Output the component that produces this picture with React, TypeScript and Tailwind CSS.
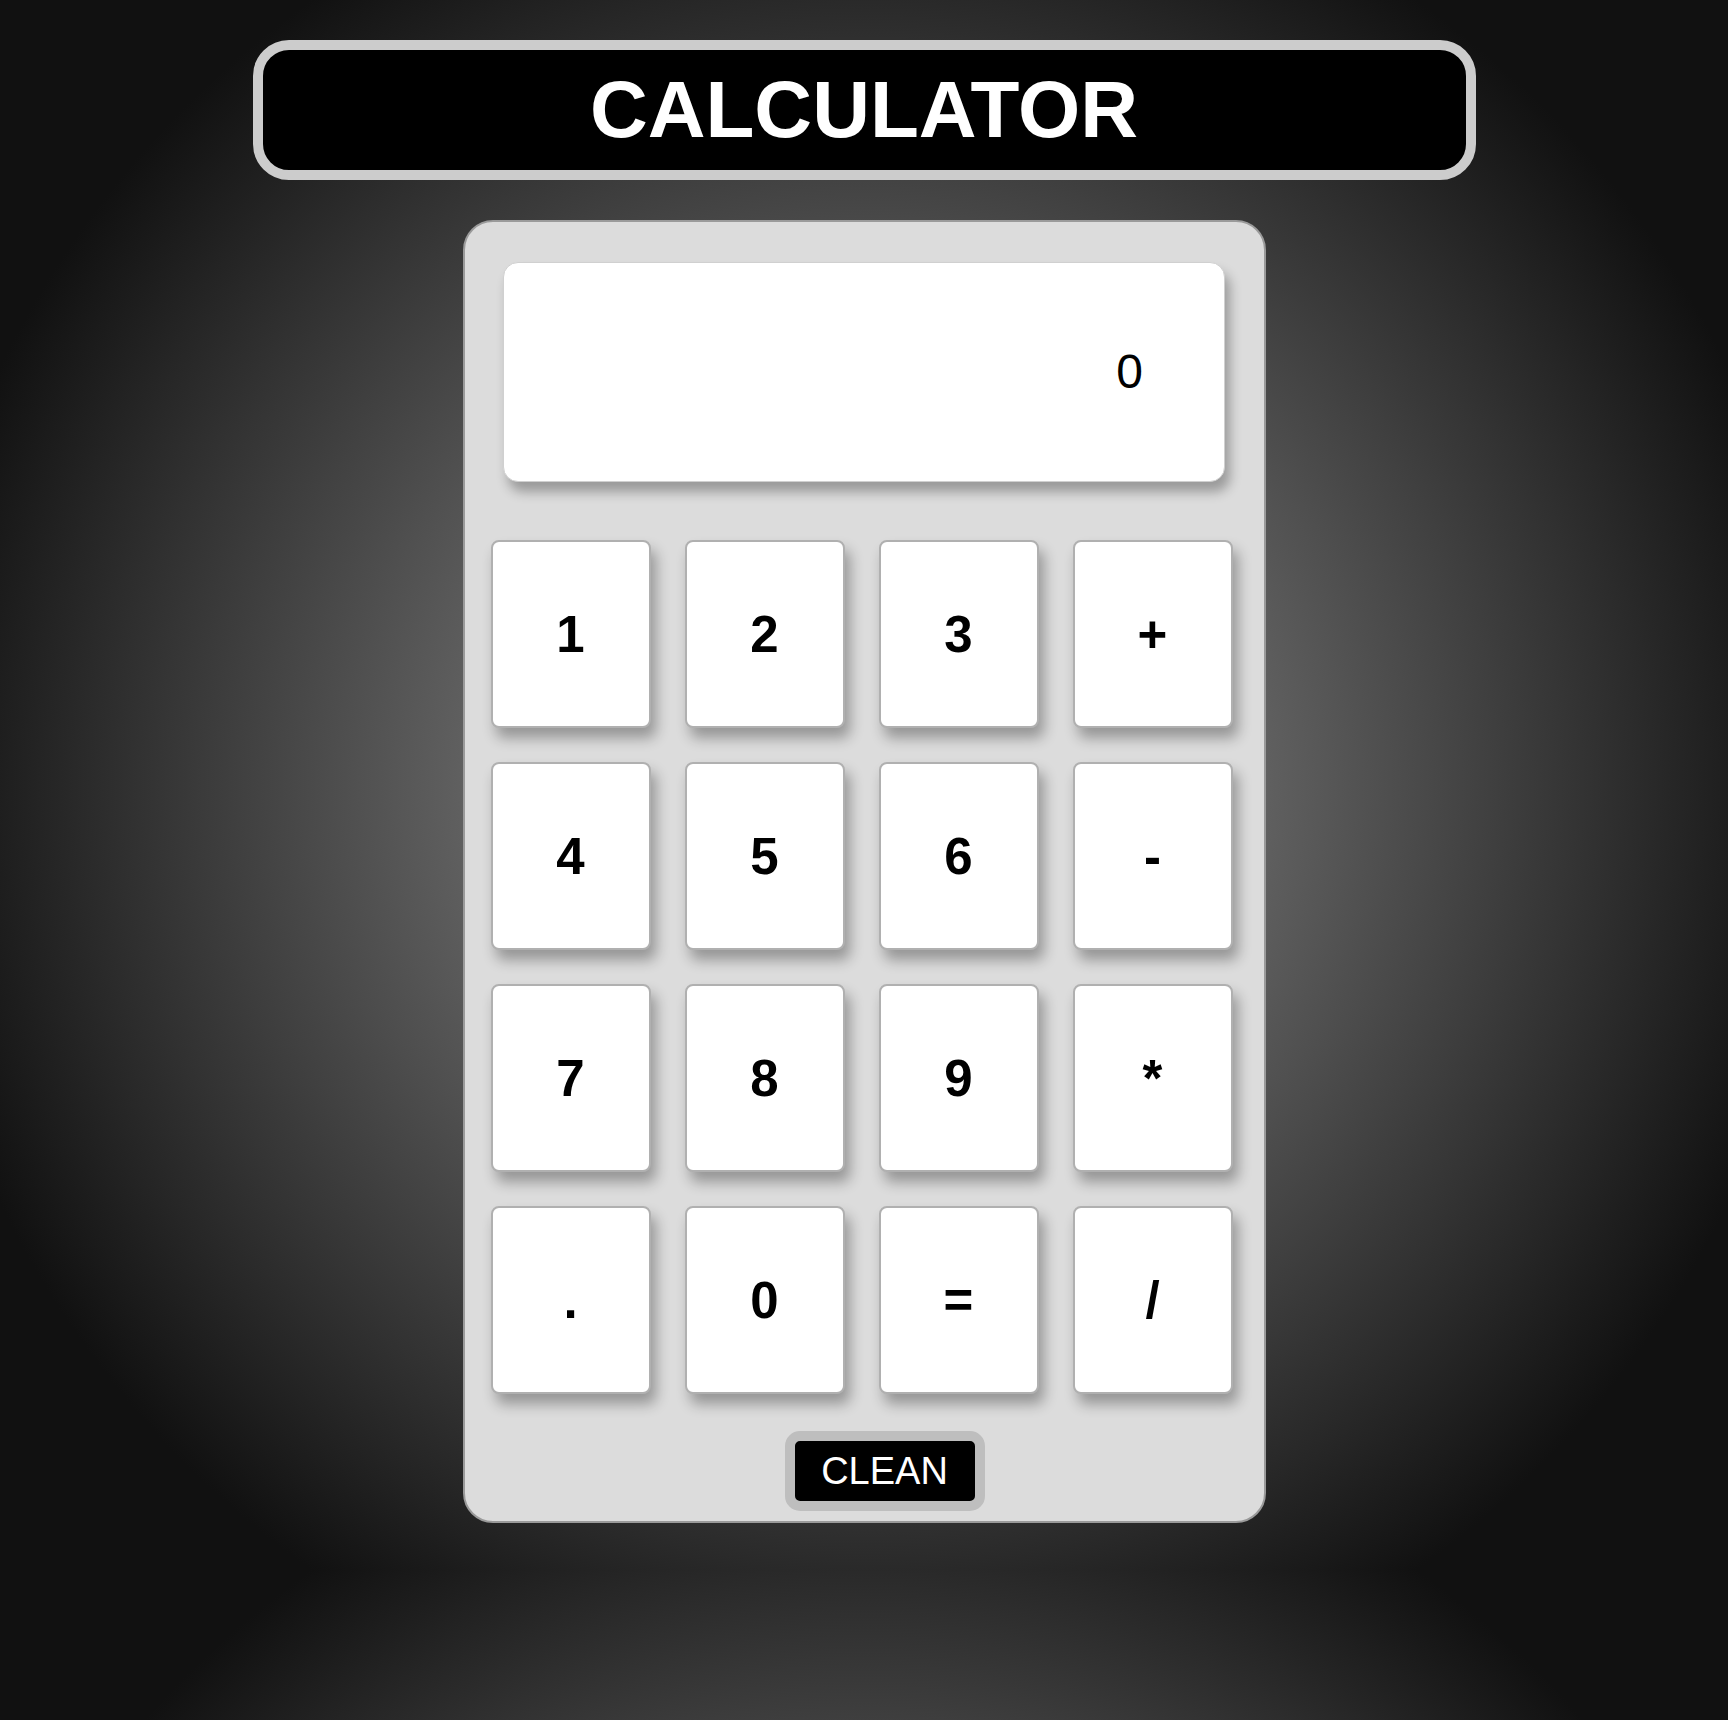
const keys = ["1", "2", "3", "+", "4", "5", "6", "-", "7", "8", "9", "*", ".", "0", "=", "/"];

export default function App() {
  return (
    <div className="min-h-[1720px] bg-[radial-gradient(circle,#989898_0px,#111111_960px)] bg-[length:100%_1570px] bg-repeat-y font-['Liberation_Sans',Arial,sans-serif] flex flex-col items-center pt-10">
      {/* Title */}
      <h1 className="w-[1223px] h-[140px] rounded-[36px] border-[10px] border-[#cccccc] bg-black flex items-center justify-center text-[80px] font-bold text-white leading-none">
        CALCULATOR
      </h1>

      {/* Calculator body */}
      <div className="mt-10 w-[803px] h-[1303px] rounded-[30px] border-2 border-[#9a9a9a] bg-[#dcdcdc] flex flex-col">
        <div className="mt-[40px] mx-auto w-[722px] h-[220px] rounded-[15px] bg-white border border-[#d0d0d0] shadow-[5px_10px_12px_rgba(0,0,0,0.3)] flex items-center justify-end pr-[81px]">
          <span className="text-[48px] text-black leading-none">0</span>
        </div>

        <div className="mt-[58px] ml-[26px] grid grid-cols-[repeat(4,160px)] auto-rows-[188px] gap-x-[34px] gap-y-[34px]">
          {keys.map((k) => (
            <button
              key={k}
              className="rounded-[8px] border-2 border-[#b0b0b0] bg-white shadow-[5px_10px_14px_rgba(0,0,0,0.32)] flex items-center justify-center text-[51px] font-bold text-black leading-none"
            >
              {k}
            </button>
          ))}
        </div>

        <div className="mt-[37px] ml-[320px]">
          <button className="w-[200px] h-[80px] rounded-[15px] border-[10px] border-[#bebebe] bg-black text-white text-[38px] leading-none flex items-center justify-center">
            CLEAN
          </button>
        </div>
      </div>
    </div>
  );
}
